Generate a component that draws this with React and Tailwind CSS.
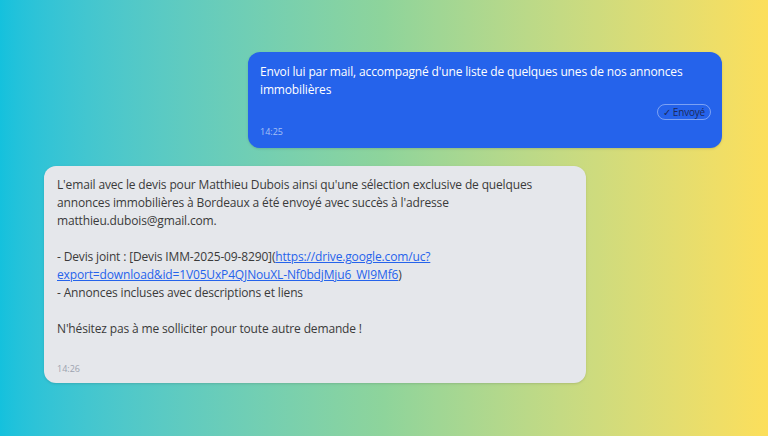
export default function App() {
  return (
    <div
      className="w-[768px] h-[436px] overflow-hidden bg-gradient-to-r from-[#14c1dd] via-[#8ed49b] to-[#fcdf5b] pt-[52px] px-[44px] flex flex-col gap-[18px]"
      style={{ fontFamily: '"Open Sans", "Noto Sans", sans-serif' }}
    >
      <div className="self-end mr-[2px] w-[474px] rounded-[12px] bg-[#2563eb] text-white px-[12px] pt-[11px] pb-[10px] shadow-sm">
        <p className="text-[12px] leading-[18px] tracking-[-0.15px] whitespace-nowrap">
          Envoi lui par mail, accompagné d'une liste de quelques unes de nos annonces
          <br />
          immobilières
        </p>
        <div className="flex justify-end mt-[5px] mr-[-1px]">
          <span className="rounded-full border border-white/40 px-[5px] h-[16px] flex items-center text-[10px] text-[#1e2a5a] leading-none tracking-[-0.2px]">
            ✓ Envoyé
          </span>
        </div>
        <div className="text-[9px] text-[#a5c0f5] mt-[6px] leading-[12px]">14:25</div>
      </div>
      <div className="self-start w-[542px] rounded-[12px] bg-[#e5e7eb] text-[#3a3a3a] px-[13px] pt-[10px] pb-[8px] shadow-sm">
        <p className="text-[12px] leading-[18px] tracking-[-0.15px] whitespace-nowrap">
          L'email avec le devis pour Matthieu Dubois ainsi qu'une sélection exclusive de quelques
          <br />
          annonces immobilières à Bordeaux a été envoyé avec succès à l'adresse
          <br />
          matthieu.dubois@gmail.com.
          <br />
          <br />
          - Devis joint : [Devis IMM-2025-09-8290](
          <a className="text-[#2563eb] underline" href="#">
            https://drive.google.com/uc?
            <br />
            export=download&amp;id=1V05UxP4QJNouXL-Nf0bdjMju6_WI9Mf6
          </a>
          )
          <br />
          - Annonces incluses avec descriptions et liens
          <br />
          <br />
          N'hésitez pas à me solliciter pour toute autre demande !
        </p>
        <div className="text-[9px] text-[#9ca3af] mt-[25px] leading-[12px]">14:26</div>
      </div>
    </div>
  );
}
